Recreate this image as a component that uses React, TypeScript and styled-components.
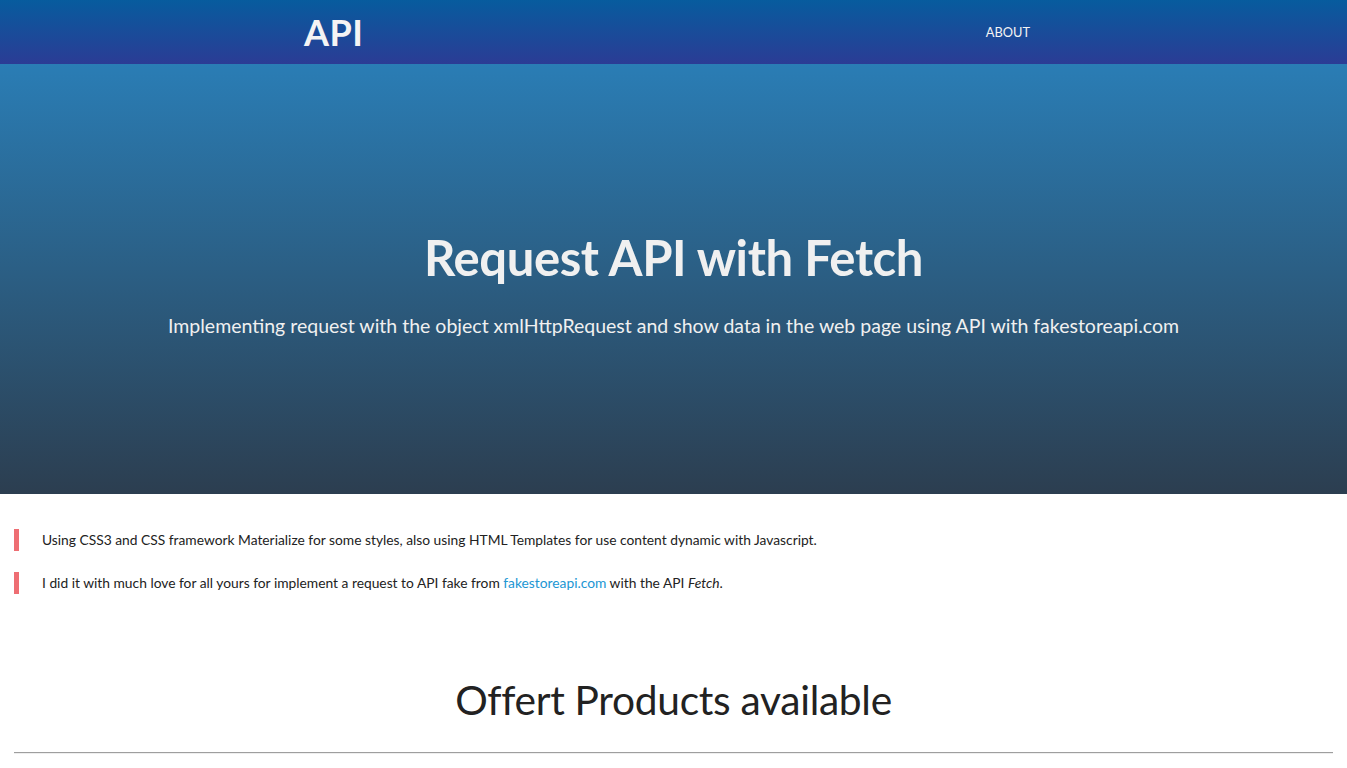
import React from "react";
import styled, { createGlobalStyle } from "styled-components";

const Global = createGlobalStyle`
  html, body { margin: 0; padding: 0; background: #fff; }
  body { font-family: Lato, "Open Sans", sans-serif; color: rgba(0,0,0,0.87); }
  * { box-sizing: border-box; }
`;

const Nav = styled.nav`
  height: 64px;
  background: linear-gradient(180deg, #075c9e 0%, #2b3c95 100%);
  box-shadow: 0 2px 4px rgba(0,0,0,0.2);
  display: flex;
  align-items: center;
`;

const NavInner = styled.div`
  width: 726px;
  margin-left: 304px;
  display: flex;
  align-items: center;
  justify-content: space-between;
`;

const Logo = styled.a`
  color: #f4f4f4;
  font-weight: 700;
  font-size: 36px;
  text-decoration: none;
  letter-spacing: 0.5px;
`;

const NavLink = styled.a`
  color: #f4f4f4;
  font-size: 12.8px;
  text-transform: uppercase;
  text-decoration: none;
`;

const Hero = styled.header`
  height: 430px;
  background: linear-gradient(180deg, #2a7db5 0%, #2c3e50 100%);
  display: flex;
  flex-direction: column;
  align-items: center;
  justify-content: center;
  color: #f0f0f0;
  padding-top: 6px;
`;

const HeroTitle = styled.h1`
  margin: 0;
  font-size: 49px;
  font-weight: 700;
  letter-spacing: -0.4px;
`;

const HeroSub = styled.p`
  margin: 28px 0 0;
  font-size: 19.5px;
`;

const Main = styled.main`
  padding: 0 14px;
`;

const Quote = styled.blockquote`
  margin: 35px 0 0;
  padding-left: 23px;
  border-left: 5px solid #ee6e73;
  font-size: 13.8px;
  line-height: 22px;
  color: #222;
  & + & { margin-top: 21px; }
`;

const Link = styled.a`
  color: #2196d3;
  text-decoration: none;
`;

const SectionTitle = styled.h2`
  margin: 81px 0 0;
  text-align: center;
  font-weight: 400;
  font-size: 40.7px;
  color: #222;
  letter-spacing: -0.3px;
`;

const Rule = styled.hr`
  margin: 28px 0 0;
  border: none;
  border-top: 1px solid #9e9e9e;
  border-bottom: 1px solid #eee;
`;

export default function App() {
  return (
    <>
      <Global />
      <Nav>
        <NavInner>
          <Logo href="#">API</Logo>
          <NavLink href="#">About</NavLink>
        </NavInner>
      </Nav>
      <Hero>
        <HeroTitle>Request API with Fetch</HeroTitle>
        <HeroSub>
          Implementing request with the object xmlHttpRequest and show data in the web page using API with fakestoreapi.com
        </HeroSub>
      </Hero>
      <Main>
        <Quote>
          Using CSS3 and CSS framework Materialize for some styles, also using HTML Templates for use content dynamic with Javascript.
        </Quote>
        <Quote>
          I did it with much love for all yours for implement a request to API fake from{" "}
          <Link href="#">fakestoreapi.com</Link> with the API <em>Fetch</em>.
        </Quote>
        <SectionTitle>Offert Products available</SectionTitle>
        <Rule />
      </Main>
    </>
  );
}
